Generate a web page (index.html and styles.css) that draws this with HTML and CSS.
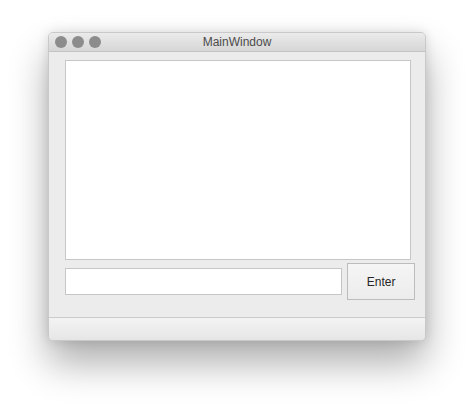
FILE: index.html
```html
<!DOCTYPE html>
<html>
<head>
<meta charset="utf-8">
<link rel="stylesheet" href="styles.css">
</head>
<body>
<div class="window">
  <div class="titlebar">
    <div class="lights">
      <span class="light"></span>
      <span class="light"></span>
      <span class="light"></span>
    </div>
    <div class="title">MainWindow</div>
  </div>
  <div class="central">
    <div class="textedit"></div>
    <div class="row">
      <div class="lineedit"></div>
      <div class="button">Enter</div>
    </div>
  </div>
  <div class="statusbar"></div>
</div>
</body>
</html>
```
FILE: styles.css
```css
html, body {
  margin: 0;
  padding: 0;
  background: #ffffff;
  width: 474px;
  height: 404px;
  overflow: hidden;
}
body {
  font-family: "Liberation Sans", Arial, sans-serif;
}
.window {
  margin: 32px 0 0 48px;
  width: 378px;
  height: 309px;
  box-sizing: border-box;
  border: 1px solid #c9c9c9;
  border-radius: 5px;
  background: #ececec;
  display: flex;
  flex-direction: column;
  overflow: hidden;
  box-shadow: 0 22px 38px rgba(0, 0, 0, 0.32), 0 0 12px rgba(0, 0, 0, 0.12);
}
.titlebar {
  position: relative;
  height: 18px;
  flex: none;
  border-bottom: 1px solid #c3c3c3;
  background: linear-gradient(#ebebeb, #d6d6d6);
  display: flex;
  align-items: center;
  justify-content: center;
}
.lights {
  position: absolute;
  left: 6px;
  top: 3px;
  display: flex;
  gap: 5px;
}
.light {
  width: 12px;
  height: 12px;
  border-radius: 50%;
  background: #8c8c8c;
}
.title {
  font-size: 12px;
  color: #4b4b4b;
  line-height: 18px;
}
.central {
  flex: 1;
  padding: 8px 10px 0 16px;
  display: flex;
  flex-direction: column;
}
.textedit {
  height: 200px;
  margin-right: 4px;
  box-sizing: border-box;
  border: 1px solid #c6c6c6;
  background: #ffffff;
}
.row {
  margin-top: 3px;
  height: 37px;
  display: flex;
  align-items: center;
  gap: 5px;
}
.lineedit {
  width: 278px;
  height: 27px;
  box-sizing: border-box;
  border: 1px solid #c6c6c6;
  background: #ffffff;
}
.button {
  width: 68px;
  height: 37px;
  box-sizing: border-box;
  border: 1px solid #bdbdbd;
  background: linear-gradient(#f5f5f5, #ececec);
  font-size: 12px;
  color: #262626;
  display: flex;
  align-items: center;
  justify-content: center;
}
.statusbar {
  flex: none;
  height: 22px;
  border-top: 1px solid #cbcbcb;
  background: linear-gradient(#f3f3f3, #e6e6e6);
}
```
